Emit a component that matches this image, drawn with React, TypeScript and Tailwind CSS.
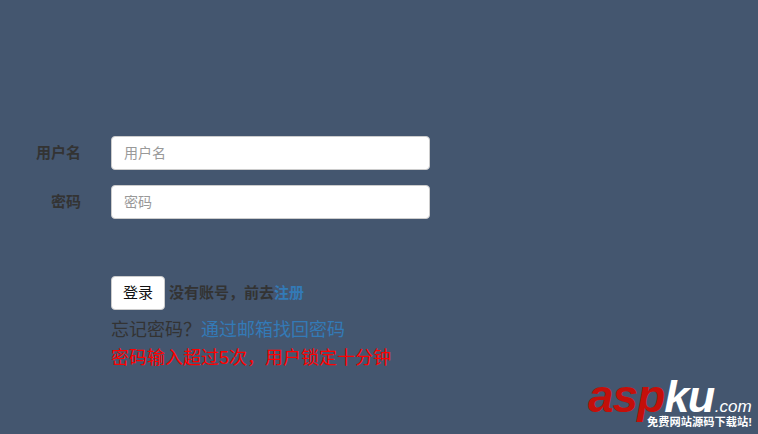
export default function App() {
  const cjk = { fontFamily: '"Liberation Sans", "Noto Sans CJK SC", sans-serif' };
  return (
    <div style={cjk} className="relative w-[758px] h-[434px] overflow-hidden bg-[#44566f] pt-[136px] text-[14px] text-[#333]">
      <div className="flex items-center h-[34px]">
        <label className="w-[81px] text-right font-bold text-[15px]">用户名</label>
        <input placeholder="用户名" className="ml-[30px] w-[319px] h-[34px] px-3 rounded border border-[#ccc] bg-white placeholder:text-[#999] outline-none" />
      </div>
      <div className="flex items-center h-[34px] mt-[15px]">
        <label className="w-[81px] text-right font-bold text-[15px]">密码</label>
        <input placeholder="密码" className="ml-[30px] w-[319px] h-[34px] px-3 rounded border border-[#ccc] bg-white placeholder:text-[#999] outline-none" />
      </div>
      <div className="flex items-center ml-[111px] mt-[57px] h-[34px]">
        <button className="w-[54px] h-[34px] rounded border border-[#ccc] bg-white text-[#111] text-[15px]">登录</button>
        <span className="ml-1 font-bold text-[15px] whitespace-nowrap">没有账号，前去<a className="text-[#337ab7]">注册</a></span>
      </div>
      <div className="ml-[111px] mt-[8px] h-[24px] leading-[24px] text-[18px] whitespace-nowrap">
        忘记密码？<a className="text-[#337ab7]">通过邮箱找回密码</a>
      </div>
      <div className="ml-[111px] mt-[4px] h-[24px] leading-[24px] text-[18px] text-[#ff0000] whitespace-nowrap">
        密码输入超过5次，用户锁定十分钟
      </div>
      <div className="absolute left-[588px] top-[378px] w-[170px] h-[56px]">
        <div className="flex items-baseline font-bold italic h-[36px] leading-[36px]" style={{ fontFamily: '"Liberation Sans", sans-serif' }}>
          <span className="text-[46px] leading-[36px] tracking-[-1px] text-[#c40f0a]">asp</span>
          <span className="text-[45px] leading-[36px] tracking-[-1.5px] text-white">ku</span>
          <span className="ml-px text-[17px] leading-[36px] font-normal text-white">.com</span>
        </div>
        <div className="absolute left-[59px] top-[37px] whitespace-nowrap text-[11.25px] leading-[14px] font-bold text-white">免费网站源码下载站!</div>
      </div>
    </div>
  );
}
